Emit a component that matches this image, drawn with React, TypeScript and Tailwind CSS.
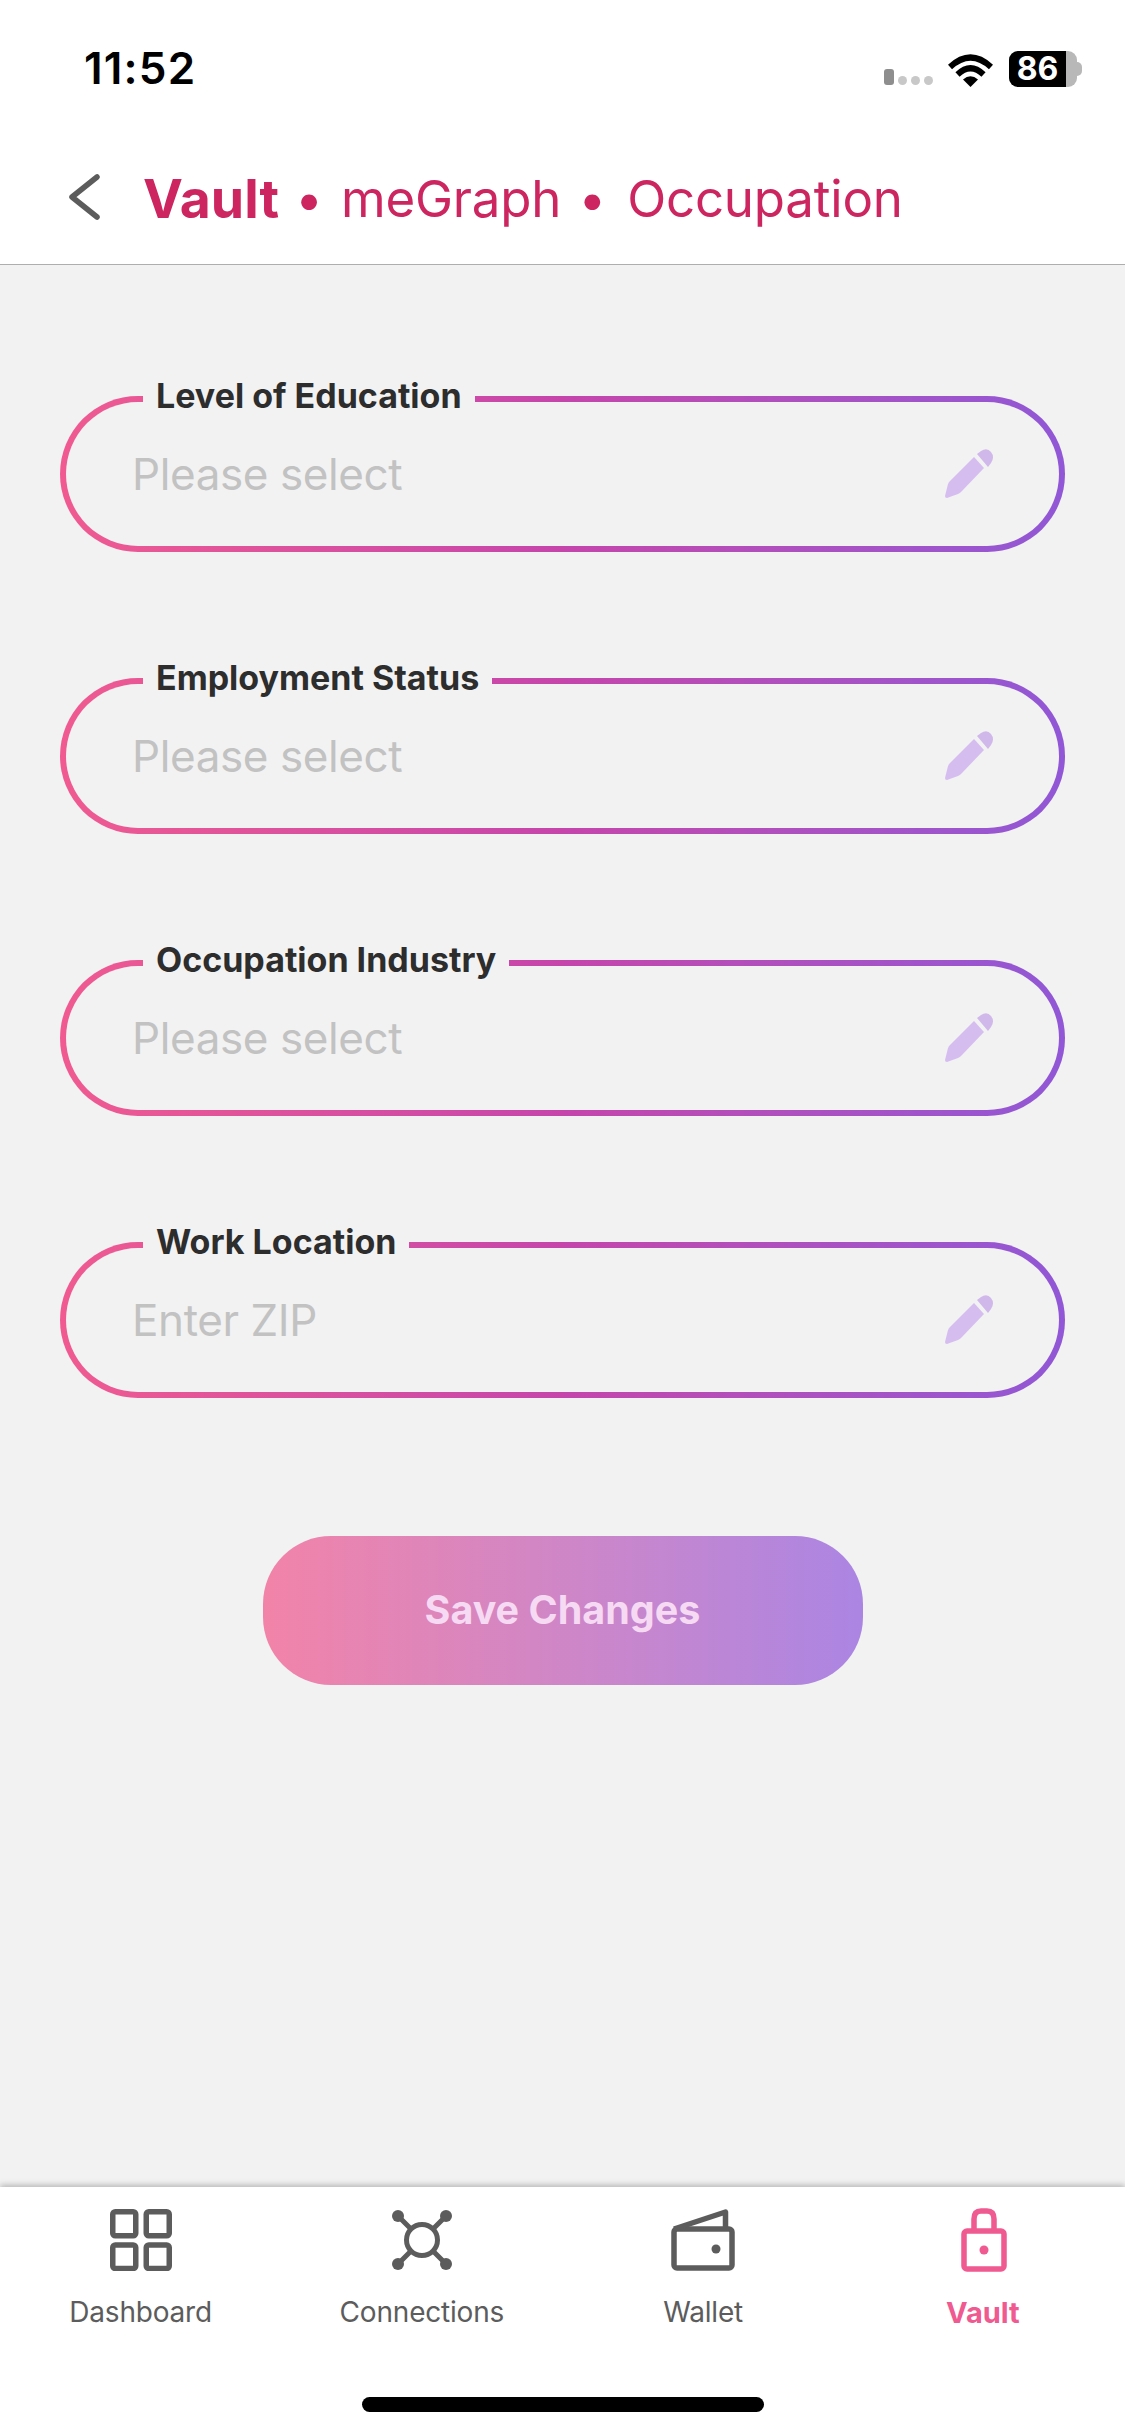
const fields = [
  { label: 'Level of Education', placeholder: 'Please select' },
  { label: 'Employment Status', placeholder: 'Please select' },
  { label: 'Occupation Industry', placeholder: 'Please select' },
  { label: 'Work Location', placeholder: 'Enter ZIP' },
]

function PencilIcon() {
  return (
    <svg width="48" height="50" viewBox="0 0 48 50" fill="#d6bdf0">
      <path d="M29 8 L39 19 L16 43 Q15 44 13 45 L2 49 Q0 49 0 47 L3 35 Q4 33 5 32 Z" />
      <path d="M32 5 L36 2 Q42 -2 46 3 Q50 8 46 14 L43 18 Z" fill="#d0b8ea" />
    </svg>
  )
}

function Field({ label, placeholder }: { label: string; placeholder: string }) {
  return (
    <div className="relative rounded-[78px] bg-gradient-to-r from-[#f05a90] via-[#c545ab] to-[#9157d6] p-[6px]">
      <div className="flex h-[144px] items-center justify-between rounded-[72px] bg-[#f2f2f3] pl-[66px] pr-[66px]">
        <span className="text-[44px] leading-none tracking-[-0.4px] text-[#c2c2c2]">{placeholder}</span>
        <PencilIcon />
      </div>
      <span className="absolute left-[83px] top-[-21px] bg-[#f2f2f3] px-[13px] text-[34px] font-bold leading-[42px] text-[#2d2d2d]">
        {label}
      </span>
    </div>
  )
}

function StatusBar() {
  return (
    <div className="flex h-[136px] items-start justify-between pl-[84px] pr-[43px] pt-[44px]">
      <span className="text-[44px] font-semibold leading-[48px] tracking-[1.2px] text-black">11:52</span>
      <div className="flex items-end pt-[7px]">
        <div className="mb-[2px] flex items-end gap-[4px]">
          <div className="h-[16px] w-[10px] rounded-[3px] bg-[#8e8e8e]" />
          <div className="h-[9px] w-[9px] rounded-full bg-[#c8c8c8]" />
          <div className="h-[9px] w-[9px] rounded-full bg-[#c8c8c8]" />
          <div className="h-[9px] w-[9px] rounded-full bg-[#c8c8c8]" />
        </div>
        <svg className="ml-[15px]" width="45" height="33" viewBox="0 0 45 33" fill="none" stroke="#000" strokeWidth="6">
          <path d="M2 13 Q22.500 -6 43 13" />
          <path d="M9.500 20.500 Q22.500 8 35.500 20.500" />
          <path d="M22.500 33 L15 25.500 Q22.500 19 30 25.500 Z" fill="#000" stroke="none" />
        </svg>
        <div className="ml-[16px] flex h-[36px] w-[68px] rounded-[9px] bg-[#b8b8b8]">
          <div className="flex h-full w-[57px] items-center justify-center rounded-l-[9px] bg-black text-[32px] font-bold leading-none text-white">
            86
          </div>
        </div>
        <div className="mb-[11px] h-[14px] w-[5px] rounded-r-full bg-[#b8b8b8]" />
      </div>
    </div>
  )
}

function Header() {
  return (
    <div className="flex h-[129px] items-start border-b border-[#aeaeae] pl-[68px] pt-[31px]">
      <svg className="mt-[7px]" width="32" height="46" viewBox="0 0 32 46" fill="none" stroke="#5c5c5c" strokeWidth="5.500" strokeLinecap="round" strokeLinejoin="round">
        <path d="M29 3 L4 23 L29 43" />
      </svg>
      <div className="ml-[43px] flex items-center text-[51px] leading-[64px] tracking-[-0.2px] text-[#cc2560]">
        <span className="text-[53.5px] font-bold tracking-normal">Vault</span>
        <span className="ml-[16px] mr-[18px] text-[50px]">•</span>
        <span>meGraph</span>
        <span className="ml-[17px] mr-[21px] text-[50px]">•</span>
        <span>Occupation</span>
      </div>
    </div>
  )
}

function DashboardIcon() {
  return (
    <svg width="62" height="62" viewBox="0 0 62 62" fill="none" stroke="#5c5c5c" strokeWidth="5.500">
      <rect x="2.750" y="2.750" width="23" height="24" rx="2.500" />
      <rect x="36.250" y="2.750" width="23" height="24" rx="2.500" />
      <rect x="2.750" y="36" width="23" height="23.500" rx="2.500" />
      <rect x="36.250" y="36" width="23" height="23.500" rx="2.500" />
    </svg>
  )
}

function ConnectionsIcon() {
  return (
    <svg width="62" height="62" viewBox="0 0 62 62" fill="none" stroke="#5c5c5c" strokeWidth="5">
      <circle cx="31" cy="31" r="15.500" />
      <path d="M7 7 L20 20 M55 7 L42 20 M7 55 L20 42 M55 55 L42 42" />
      <g fill="#5c5c5c" stroke="none">
        <circle cx="7" cy="7" r="6" />
        <circle cx="55" cy="7" r="6" />
        <circle cx="7" cy="55" r="6" />
        <circle cx="55" cy="55" r="6" />
      </g>
    </svg>
  )
}

function WalletIcon() {
  return (
    <svg width="64" height="62" viewBox="0 0 64 62" fill="none" stroke="#5c5c5c" strokeWidth="5.500" strokeLinejoin="round">
      <rect x="3" y="20" width="58" height="39" rx="3" />
      <path d="M3 20 L54.500 3 V20" />
      <circle cx="45" cy="40" r="4.500" fill="#5c5c5c" stroke="none" />
    </svg>
  )
}

function LockIcon() {
  return (
    <svg width="46" height="64" viewBox="0 0 46 64" fill="none" stroke="#ef5a90" strokeWidth="5.500">
      <rect x="3" y="23" width="40" height="38" rx="3" />
      <path d="M13 23 V11 Q13 3 20 3 H26 Q33 3 33 11 V23" />
      <circle cx="23" cy="42" r="4.500" fill="#ef5a90" stroke="none" />
    </svg>
  )
}

const tabs = [
  { label: 'Dashboard', icon: <DashboardIcon /> },
  { label: 'Connections', icon: <ConnectionsIcon /> },
  { label: 'Wallet', icon: <WalletIcon /> },
  { label: 'Vault', icon: <LockIcon />, active: true },
]

function TabBar() {
  return (
    <div className="relative h-[249px] bg-white shadow-[0_-2px_6px_rgba(0,0,0,0.25)]">
      <div className="grid grid-cols-4 pt-[21px]">
        {tabs.map((tab) => (
          <div key={tab.label} className="flex flex-col items-center">
            <div className="flex h-[64px] items-center">{tab.icon}</div>
            <span
              className={
                tab.active
                  ? 'mt-[21px] pr-[3px] text-[29px] font-bold leading-[40px] text-[#ef5a90]'
                  : 'mt-[20px] text-[28px] leading-[40px] tracking-[-0.2px] text-[#5c5c5c]'
              }
            >
              {tab.label}
            </span>
          </div>
        ))}
      </div>
      <div className="absolute bottom-[24px] left-[362px] h-[15px] w-[402px] rounded-full bg-black" />
    </div>
  )
}

export default function App() {
  return (
    <div className="flex h-[2436px] w-[1125px] flex-col bg-white font-['Inter',sans-serif]">
      <StatusBar />
      <Header />
      <main className="flex flex-1 flex-col bg-[#f2f2f3] px-[60px] pt-[131px]">
        <div className="flex flex-col gap-[126px]">
          {fields.map((field) => (
            <Field key={field.label} label={field.label} placeholder={field.placeholder} />
          ))}
        </div>
        <button className="mx-auto mt-[138px] h-[149px] w-[600px] rounded-[68px] bg-gradient-to-r from-[#f283a8] to-[#ab85e3] text-[39.5px] font-bold text-[#f6d9f2]">
          Save Changes
        </button>
      </main>
      <TabBar />
    </div>
  )
}
